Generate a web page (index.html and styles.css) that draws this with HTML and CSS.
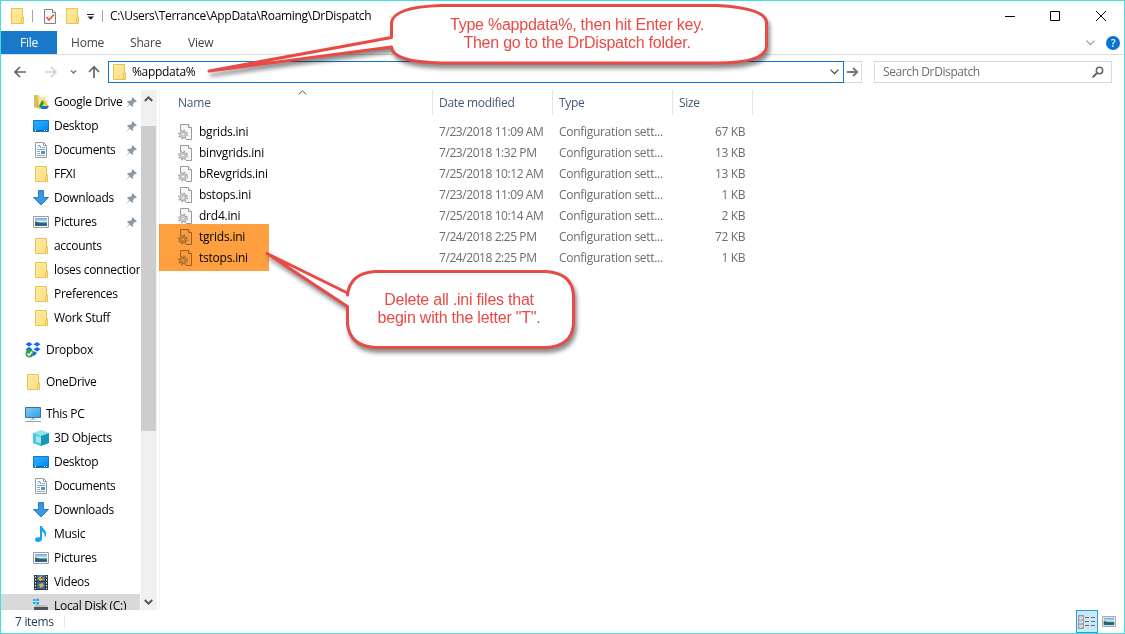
FILE: index.html
```
<!DOCTYPE html>
<html lang="en">
<head>
<meta charset="utf-8">
<title>DrDispatch</title>
<link rel="stylesheet" href="styles.css">
</head>
<body>
<svg class="defs" width="0" height="0" aria-hidden="true">
  <defs>
    <linearGradient id="blue" x2="1" y2="1"><stop stop-color="#28aaff"/><stop offset=".5" stop-color="#18a0ff"/><stop offset="1" stop-color="#0078e8"/></linearGradient>
    <linearGradient id="fold" x2="1" y2="1"><stop stop-color="#ffeaa0"/><stop offset="1" stop-color="#ffdf80"/></linearGradient>
    <linearGradient id="sky" x2="0" y2="1"><stop stop-color="#5aa5dc"/><stop offset=".45" stop-color="#d5edf6"/><stop offset=".65" stop-color="#3b6f78"/><stop offset="1" stop-color="#2468a8"/></linearGradient>
    <linearGradient id="screen" x2="1" y2="1"><stop stop-color="#7fcdf6"/><stop offset="1" stop-color="#2aa2f0"/></linearGradient>
  </defs>
  <symbol id="folder" viewBox="0 0 16 16"><path d="M2.500.5h11v10l1 1v4h-12z" fill="url(#fold)" stroke="#e9c352"/><path d="M12.500 15v-5l2-1v6" fill="#ffe08a" stroke="#e9c352"/></symbol>
  <symbol id="gdrive" viewBox="0 0 16 16"><path d="M1 1h5l1 2h5v11H3l-2-1z" fill="#eed77b"/><path d="M1 1h3l3 14-6-2z" fill="#dabd59"/><path d="M6 3h5v8H6z" fill="#f8e8a1"/><path d="M9 6h3l4 7h-3z" fill="#ffc814"/><path d="M9 6l2 3-3 6-2-3z" fill="#209e53"/><path d="M9 12h7l-2 3H8z" fill="#2468dd"/></symbol>
  <symbol id="desktop" viewBox="0 0 16 16"><path d="M.5 2.500h15v11H.5z" fill="url(#blue)" stroke="#1477bd"/><path d="M1 12h14v1H1z" fill="#0a64a8"/><path d="M2 12.500h1M11 12.500h1M13 12.500h1" stroke="#fff"/></symbol>
  <symbol id="doc" viewBox="0 0 16 16"><path d="M2.500.5h8l3 3v12h-11z" fill="#fff" stroke="#999"/><path d="M10.500.5v3h3" fill="none" stroke="#999"/><path d="M4 5.500h1M5 3.500h2M6 4.500h2M7 5.500h1M9 5.500h3M4 7.500h8M4 9.500h3M4 11.500h3M4 13.500h8" stroke="#75a9cc"/><path d="M8 9h4v3H8z" fill="#4a91c4"/></symbol>
  <symbol id="down" viewBox="0 0 16 16"><path d="M5.500.5h5v7h5L8 15 .5 7.500h5z" fill="#3b96e2" stroke="#2b7fc9"/></symbol>
  <symbol id="pic" viewBox="0 0 16 16"><path d="M.5 2.500h15v11H.5z" fill="#fff" stroke="#9c9c9c"/><path d="M2 4h12v8H2z" fill="url(#sky)"/><path d="M2 7l5 2 7 1v1H2z" fill="#275e59" opacity=".75"/></symbol>
  <symbol id="dropbox" viewBox="0 0 16 16"><path d="M4 0l3.500 2.200L4 4.500.5 2.200zM12 0l3.500 2.200L12 4.500 8.500 2.200zM4 5l3.500 2.200L4 9.500.5 7.200zM12 5l3.500 2.200L12 9.500 8.500 7.200zM9 9l3 2-3 3-3-2z" fill="#0b68f5"/><circle cx="4.500" cy="11.500" r="4" fill="#39a34a"/><path d="M2.500 11.500l1.500 1.700 3-3.500" fill="none" stroke="#fff" stroke-width="1.400"/></symbol>
  <symbol id="pc" viewBox="0 0 16 16"><path d="M.5 1.500h15v10H.5z" fill="url(#screen)" stroke="#3f7292"/><path d="M7 12h2v1H7zM4 13h8v.6H4z" fill="#8ba5b5"/><path d="M0 15.500h16" stroke="#8ba5b5"/></symbol>
  <symbol id="cube" viewBox="0 0 16 16"><path d="M0 3l8-3 8 3v10l-8 3-8-3z" fill="#8ee4ec"/><path d="M0 3l8 3v10l-8-3z" fill="#4cc8da"/><path d="M8 6l8-3v10l-8 3z" fill="#1698b5"/><path d="M3 6l5 1v6l-5-1z" fill="#a4e9f0"/></symbol>
  <symbol id="music" viewBox="0 0 16 16"><path d="M7 0h2c0 3 5 4 4 9-.2 1-.7 2-1.500 2.700C12.500 8 10.500 6 9 5.500V13c0 2-2 3-4 3s-3-1-3-2.500S4 11 7 11.500z" fill="#18a2ed"/></symbol>
  <symbol id="video" viewBox="0 0 16 16"><path d="M1 1h14v15H1z" fill="#363636"/><path d="M4 1h8v6H4z" fill="#3976b8"/><path d="M4 8h8v7H4z" fill="#2c6ab0"/><path d="M5 4l3-2 3 3-4 2zM6 10l4-1 1 3-4 2z" fill="#e0b42c"/><path d="M8 3h2v2H8z" fill="#cc5038"/><path d="M2.500 2v13M13.500 2v13" stroke="#eee" stroke-dasharray="1.500 1.500"/></symbol>
  <symbol id="disk" viewBox="0 0 16 16"><path d="M0 1h2.500v2H0zM3.300.5H6V3H3.300zM0 4h2.500v2H0zM3.300 4H6v2.500H3.300z" fill="#10b4f0"/><path d="M3 7h10l2 2H1z" fill="#b9bdc0"/><path d="M1 9h14v4H1z" fill="#4e5357"/></symbol>
  <symbol id="pin" viewBox="0 0 11 11"><path d="M6.500 0L11 4.500l-1.200.6-.8-.2-2 2 .2 2-1 1L3.700 7.500.5 10.500 0 11l.3-.8 3-3.200L1 4.800l1-1 2.200.2 2-2-.2-1z" fill="#8c9aa5"/></symbol>
  <symbol id="ini" viewBox="0 0 16 16"><path d="M2.500 6V.5h8l3 3v12H8" fill="#f7f7f7" stroke="#999"/><path d="M10.500.5v3h3" fill="#fff" stroke="#999"/><circle cx="5" cy="10.500" r="3.200" fill="#dce0e2" stroke="#a0a6aa"/><circle cx="5" cy="10.500" r="4.300" fill="none" stroke="#a0a6aa" stroke-width="1.400" stroke-dasharray="1.700 1.677"/><circle cx="5" cy="10.500" r="1.500" fill="#fff" stroke="#a0a6aa" stroke-width=".8"/></symbol>
</svg>

<div class="window">
  <header class="title">
    <svg class="i16"><use href="#folder"/></svg>
    <i class="sep s1"></i>
    <svg class="check" viewBox="0 0 12 15"><path d="M.5.5h8l3 3v11H.5z" fill="#f6f8fb" stroke="#808080"/><path d="M8.500.5v3h3" fill="#fff" stroke="#808080"/><path d="M2.500 8l2.500 3 5-5.500" fill="none" stroke="#ed5a2d" stroke-width="1.700"/></svg>
    <svg class="i16 f2"><use href="#folder"/></svg>
    <svg class="drop" viewBox="0 0 8 6"><path d="M0 .5h7" stroke="#222"/><path d="M.5 2.500h6.500L3.800 5.800z" fill="#222"/></svg>
    <i class="sep s2"></i>
    <span class="path">C:\Users\Terrance\AppData\Roaming\DrDispatch</span>
    <svg class="winbtns" viewBox="0 0 102 12"><g fill="none" stroke="#000"><path d="M0 6.500h10M45.500 1.500h9v9h-9zM91 1l10 10M101 1L91 11"/></g></svg>
  </header>
  <nav class="tabs">
    <span class="tab file">File</span><span class="tab home">Home</span><span class="tab share">Share</span><span class="tab view">View</span>
    <svg class="chev" viewBox="0 0 9 6"><path d="M.5.700l4 4 4-4" fill="none" stroke="#999" stroke-width="1.200"/></svg>
    <span class="help">?</span>
  </nav>
  <div class="addressbar">
    <svg class="arrows" viewBox="0 0 90 14"><g fill="none" stroke-width="1.700"><path d="M12 7H1.500M6 2L1 7l5 5" stroke="#666"/><path d="M31 7h10.500M37 2l5 5-5 5" stroke="#d2d2d2"/><path d="M57 5.500l2.500 2.500L62 5.500" stroke="#777" stroke-width="1.500"/><path d="M80 13V2M75 7l5-5.300L85 7" stroke="#666"/></g></svg>
    <div class="field"><svg class="i16"><use href="#folder"/></svg><span>%appdata%</span><svg class="chev2" viewBox="0 0 9 6"><path d="M.5.700l4 4 4-4" fill="none" stroke="#444" stroke-width="1.200"/></svg></div>
    <div class="go"><svg viewBox="0 0 12 10"><path d="M0 5h10M6 1l4.300 4L6 9" fill="none" stroke="#777" stroke-width="1.800"/></svg></div>
    <div class="search"><span>Search DrDispatch</span><svg viewBox="0 0 12 12"><circle cx="7.500" cy="4.500" r="3.200" fill="none" stroke="#686868" stroke-width="1.500"/><path d="M5.200 6.800L.7 11.300" stroke="#686868" stroke-width="2"/></svg></div>
  </div>
  <main class="body">
    <aside class="side">
      <div class="item"><svg class="i16"><use href="#gdrive"/></svg><span>Google Drive</span><svg class="pin"><use href="#pin"/></svg></div>
      <div class="item"><svg class="i16"><use href="#desktop"/></svg><span>Desktop</span><svg class="pin"><use href="#pin"/></svg></div>
      <div class="item"><svg class="i16"><use href="#doc"/></svg><span>Documents</span><svg class="pin"><use href="#pin"/></svg></div>
      <div class="item"><svg class="i16"><use href="#folder"/></svg><span>FFXI</span><svg class="pin"><use href="#pin"/></svg></div>
      <div class="item"><svg class="i16"><use href="#down"/></svg><span>Downloads</span><svg class="pin"><use href="#pin"/></svg></div>
      <div class="item"><svg class="i16"><use href="#pic"/></svg><span>Pictures</span><svg class="pin"><use href="#pin"/></svg></div>
      <div class="item"><svg class="i16"><use href="#folder"/></svg><span>accounts</span></div>
      <div class="item"><svg class="i16"><use href="#folder"/></svg><span>loses connection</span></div>
      <div class="item"><svg class="i16"><use href="#folder"/></svg><span>Preferences</span></div>
      <div class="item"><svg class="i16"><use href="#folder"/></svg><span>Work Stuff</span></div>
      <div class="item root"><svg class="i16"><use href="#dropbox"/></svg><span>Dropbox</span></div>
      <div class="item root"><svg class="i16"><use href="#folder"/></svg><span>OneDrive</span></div>
      <div class="item root"><svg class="i16"><use href="#pc"/></svg><span>This PC</span></div>
      <div class="item"><svg class="i16"><use href="#cube"/></svg><span>3D Objects</span></div>
      <div class="item"><svg class="i16"><use href="#desktop"/></svg><span>Desktop</span></div>
      <div class="item"><svg class="i16"><use href="#doc"/></svg><span>Documents</span></div>
      <div class="item"><svg class="i16"><use href="#down"/></svg><span>Downloads</span></div>
      <div class="item"><svg class="i16"><use href="#music"/></svg><span>Music</span></div>
      <div class="item"><svg class="i16"><use href="#pic"/></svg><span>Pictures</span></div>
      <div class="item"><svg class="i16"><use href="#video"/></svg><span>Videos</span></div>
      <div class="item selected"><svg class="i16"><use href="#disk"/></svg><span>Local Disk (C:)</span></div>
    </aside>
    <div class="scroll">
      <svg viewBox="0 0 9 6"><path d="M.8 5l3.700-3.700L8.200 5" fill="none" stroke="#505050" stroke-width="1.800"/></svg>
      <div class="thumb"></div>
      <svg viewBox="0 0 9 6"><path d="M.8 1l3.700 3.700L8.200 1" fill="none" stroke="#505050" stroke-width="1.800"/></svg>
    </div>
    <section class="files">
      <div class="row head"><span class="name">Name</span><span>Date modified</span><span>Type</span><span>Size</span><svg class="sort" viewBox="0 0 9 5"><path d="M.7 4.500l3.800-3.700 3.800 3.700" fill="none" stroke="#555"/></svg></div>
      <div class="row"><span class="name"><svg class="i16"><use href="#ini"/></svg>bgrids.ini</span><span class="date">7/23/2018 11:09 AM</span><span>Configuration sett...</span><span class="size">67 KB</span></div>
      <div class="row"><span class="name"><svg class="i16"><use href="#ini"/></svg>binvgrids.ini</span><span class="date">7/23/2018 1:32 PM</span><span>Configuration sett...</span><span class="size">13 KB</span></div>
      <div class="row"><span class="name"><svg class="i16"><use href="#ini"/></svg>bRevgrids.ini</span><span class="date">7/25/2018 10:12 AM</span><span>Configuration sett...</span><span class="size">13 KB</span></div>
      <div class="row"><span class="name"><svg class="i16"><use href="#ini"/></svg>bstops.ini</span><span class="date">7/23/2018 11:09 AM</span><span>Configuration sett...</span><span class="size">1 KB</span></div>
      <div class="row"><span class="name"><svg class="i16"><use href="#ini"/></svg>drd4.ini</span><span class="date">7/25/2018 10:14 AM</span><span>Configuration sett...</span><span class="size">2 KB</span></div>
      <div class="row"><span class="name"><svg class="i16"><use href="#ini"/></svg>tgrids.ini</span><span class="date">7/24/2018 2:25 PM</span><span>Configuration sett...</span><span class="size">72 KB</span></div>
      <div class="row"><span class="name"><svg class="i16"><use href="#ini"/></svg>tstops.ini</span><span class="date">7/24/2018 2:25 PM</span><span>Configuration sett...</span><span class="size">1 KB</span></div>
    </section>
  </main>
  <footer class="status">
    <span>7 items</span><i class="sep"></i>
    <div class="mode on"><svg width="18" height="14" viewBox="0 0 18 14"><path d="M.75.750h4.500v12.500H.75zM1 4.900h4M1 9h4" fill="#fff" stroke="#999" stroke-width="1.300"/><path d="M7 2.500h4M13 2.500h4M7 6.500h4M13 6.500h4M7 10.500h4M13 10.500h4" stroke="#666"/><path d="M2.500 2.500h1" stroke="#3a7"/><path d="M2.500 6.800h1" stroke="#27c"/><path d="M2.500 11h1" stroke="#c33"/></svg></div>
    <div class="mode"><svg width="14" height="11" viewBox="0 2 16 12" preserveAspectRatio="none"><use href="#pic" width="16" height="16"/></svg></div>
  </footer>
</div>

<div class="highlight"></div>
<svg class="callouts" width="1125" height="634" viewBox="0 0 1125 634">
  <g fill="#fff" stroke="#e84a45" stroke-width="3" stroke-linejoin="round">
    <path d="M441 5.500H717Q766.500 8 766.500 23V47Q764 63 717 63H441Q393 62 391.500 47L209 71 391.500 37.500V23Q393 7 441 5.500z"/>
    <path d="M375 271.500H546Q572 273 573.500 295V324Q572 346 546 347.500H375Q350 346 347.500 324V306.500L267 253.500 347.500 293V295Q350 273 375 271.500z"/>
  </g>
</svg>
<p class="note n1">Type %appdata%, then hit Enter key.<br>Then go to the DrDispatch folder.</p>
<p class="note n2">Delete all .ini files that<br>begin with the letter "T".</p>
</body>
</html>
```
FILE: styles.css
```
* { box-sizing: border-box; }
body { margin: 0; width: 1125px; height: 634px; overflow: hidden; position: relative; background: #fff; font: 12px/16px "Open Sans", "Noto Sans", sans-serif; letter-spacing: -.3px; color: #000; }
svg { display: block; flex: none; }
.defs { position: absolute; }
.i16 { width: 16px; height: 16px; flex: none; }
.window { width: 1125px; height: 634px; border: 1px solid #45dfe2; display: flex; flex-direction: column; }
.sep { width: 1px; background: #a0a0a0; }

.title { height: 30px; flex: none; display: flex; align-items: center; padding-left: 8px; }
.title .sep { height: 12px; }
.s1 { margin-left: 7px; }
.check { width: 12px; height: 15px; margin-left: 11px; }
.f2 { margin-left: 8px; }
.drop { width: 8px; height: 6px; margin: 2px 0 0 7px; }
.s2 { margin-left: 7px; }
.path { margin-left: 7px; width: 300px; }
.winbtns { width: 102px; height: 12px; margin-left: auto; margin-right: 17px; }

.tabs { height: 24px; flex: none; display: flex; align-items: center; border-bottom: 1px solid #dadbdc; color: #444; }
.tab { height: 23px; line-height: 23px; letter-spacing: -.2px; }
.file { width: 56px; background: #1979ca; color: #fff; text-align: center; }
.home { margin-left: 14px; width: 59px; }
.share { width: 58px; }
.chev { width: 9px; height: 6px; margin-left: auto; }
.help { width: 14px; height: 14px; margin: 0 4px 0 11px; border-radius: 50%; background: #0874d1; color: #fff; font-size: 10px; font-weight: 600; line-height: 14px; text-align: center; }

.addressbar { height: 35px; flex: none; display: flex; align-items: center; padding: 0 0 2px 13px; }
.arrows { width: 90px; height: 14px; }
.field { width: 736px; height: 22px; margin-left: 4px; border: 1px solid #0a77d5; display: flex; align-items: center; padding: 0 4px 0 2px; }
.field span { margin-left: 5px; }
.chev2 { width: 9px; height: 6px; margin-left: auto; }
.go { width: 18px; height: 22px; border: 1px solid #d9d9d9; border-left: 0; display: grid; place-items: center; }
.go svg { width: 12px; height: 10px; }
.search { width: 238px; height: 22px; margin-left: 12px; border: 1px solid #d9d9d9; display: flex; align-items: center; justify-content: space-between; padding: 0 7px 0 8px; color: #6d6d6d; letter-spacing: -.4px; }
.search svg { width: 12px; height: 12px; }

.body { height: 520px; flex: none; display: flex; }
.side { width: 139px; flex: none; overflow: hidden; }
.item { height: 24px; display: flex; align-items: center; padding-left: 32px; white-space: nowrap; }
.item span { margin-left: 5px; }
.item.root { margin-top: 8px; padding-left: 24px; }
.selected { background: #d9d9d9; }
.pin { width: 11px; height: 11px; margin-left: auto; margin-right: 3px; }
.scroll { width: 16px; flex: none; margin-left: 1px; background: #f0f0f0; display: flex; flex-direction: column; align-items: center; padding: 6px 1px 5px 0; }
.scroll svg { width: 9px; height: 6px; }
.thumb { width: 15px; height: 305px; margin-top: 24px; margin-bottom: auto; background: #cdcdcd; }
.files { flex: 1; margin-left: 2px; border-left: 1px solid #f3f3f3; }
.row { height: 21px; display: grid; grid-template-columns: 273px 120px 120px 80px; line-height: 21px; color: #6d6d6d; white-space: nowrap; }
.row > span { padding-left: 6px; }
.row .name { padding-left: 18px; color: #000; display: flex; align-items: center; gap: 5px; letter-spacing: -.22px; }
.row .date { letter-spacing: -.43px; }
.row .size { text-align: right; padding-right: 8px; letter-spacing: -.4px; }
.row.head { position: relative; height: 25px; margin-bottom: 6px; color: #43577c; line-height: 25px; }
.row.head > span { border-right: 1px solid #e5e5e5; }
.row.head .name { color: #43577c; }
.sort { position: absolute; left: 138px; top: 0; width: 9px; height: 5px; }

.status { flex: 1; display: flex; align-items: center; padding-left: 14px; color: #1e395b; }
.status .sep { height: 12px; margin-left: 10px; background: #e8e8e8; }
.mode { width: 22px; height: 23px; display: grid; place-items: center; }
.mode.on { margin-left: auto; background: #cce8f6; border: 1px solid #26a0da; }
.mode:last-child { margin-right: 4px; }

.highlight { position: absolute; left: 159px; top: 224px; width: 110px; height: 47px; background: #ffa040; mix-blend-mode: multiply; }
.callouts { position: absolute; left: 0; top: 0; filter: drop-shadow(2px 4px 2px rgba(0, 0, 0, .45)); }
.note { position: absolute; margin: 0; text-align: center; font: 16px/18px "Liberation Sans", Arial, sans-serif; color: #e84a45; white-space: nowrap; }
.n1 { left: 391px; top: 16px; width: 372px; letter-spacing: -.23px; }
.n2 { left: 347px; top: 291px; width: 224px; letter-spacing: -.23px; }
```
